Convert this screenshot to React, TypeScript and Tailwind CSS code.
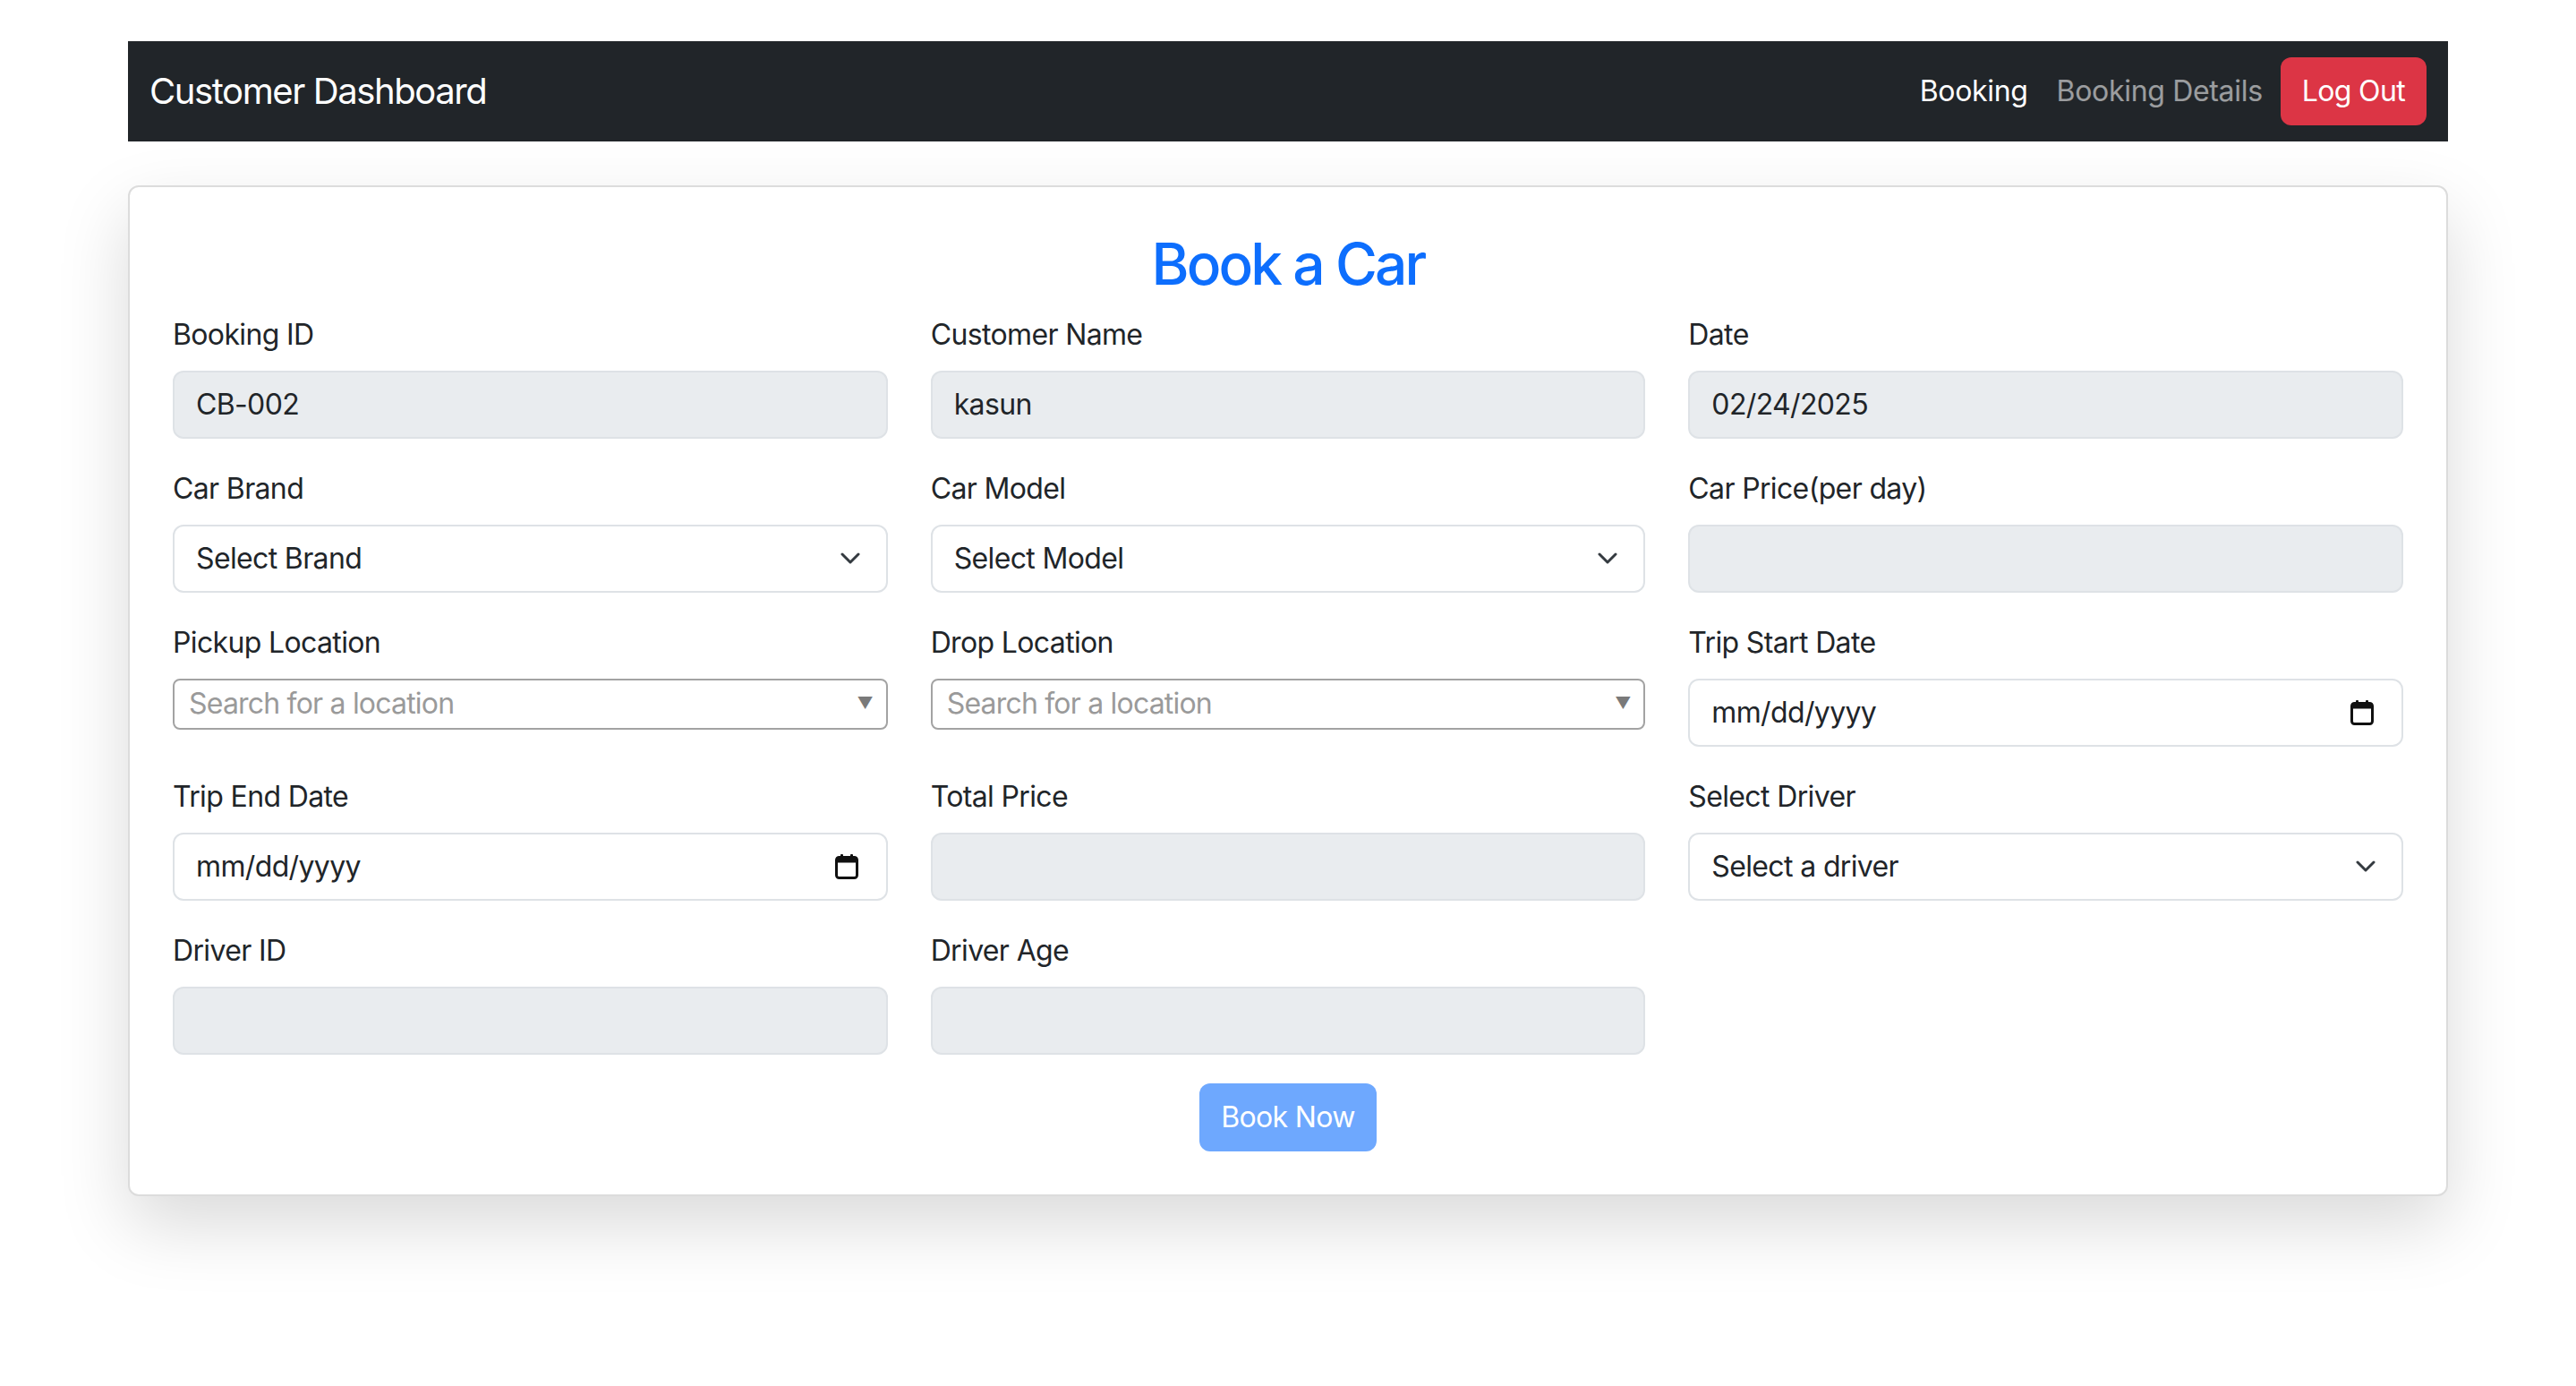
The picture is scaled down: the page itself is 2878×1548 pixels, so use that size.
import React from 'react';

const font = { fontFamily: 'Inter, "Noto Sans", sans-serif' };

const Chevron = () => (
  <svg width="22" height="13" viewBox="0 0 22 13" className="shrink-0">
    <path d="M2 2l9 9 9-9" fill="none" stroke="#343a40" strokeWidth="3" strokeLinecap="round" strokeLinejoin="round" />
  </svg>
);

const CalendarIcon = () => (
  <svg width="26" height="28" viewBox="0 0 26 28" className="shrink-0">
    <rect x="6" y="0" width="3" height="5" rx="1" fill="#111" />
    <rect x="17" y="0" width="3" height="5" rx="1" fill="#111" />
    <rect x="1.5" y="3.5" width="23" height="23" rx="3" fill="none" stroke="#111" strokeWidth="3" />
    <rect x="1.5" y="3.5" width="23" height="6" fill="#111" />
  </svg>
);

const Label: React.FC<{ children: React.ReactNode }> = ({ children }) => (
  <label className="block text-[32px] leading-[48px] tracking-[-0.02em] text-[#212529] mb-[16px]">{children}</label>
);

const baseBox = 'h-[76px] w-full rounded-[12px] border-2 border-[#dee2e6] pl-[24px] text-[32px] tracking-[-0.02em] text-[#212529] flex items-center';

const Field: React.FC<{ label: string; children: React.ReactNode }> = ({ label, children }) => (
  <div className="mb-[32px]">
    <Label>{label}</Label>
    {children}
  </div>
);

const Disabled = ({ value = '' }: { value?: string }) => (
  <div className={`${baseBox} bg-[#e9ecef] pr-[24px]`}>{value}</div>
);

const Select = ({ value }: { value: string }) => (
  <div className={`${baseBox} bg-white justify-between pr-[29px]`}>
    <span>{value}</span>
    <Chevron />
  </div>
);

const DateBox = () => (
  <div className={`${baseBox} bg-white justify-between pr-[31px]`}>
    <span>mm/dd/yyyy</span>
    <CalendarIcon />
  </div>
);

const LocationSearch = () => (
  <div className="h-[57px] w-full rounded-[8px] border-2 border-[#a3a3a3] bg-white pl-[16px] pr-[14px] flex items-center justify-between">
    <span className="text-[32px] tracking-[-0.025em] text-[#9a9a9a] leading-none">Search for a location</span>
    <span className="text-[18px] text-[#7a7a7a] leading-none">▼</span>
  </div>
);

export default function App() {
  return (
    <div className="min-h-screen bg-white" style={font}>
      <div className="ml-[143px] w-[2592px] pt-[46px]">
        <nav className="h-[112px] bg-[#212529] flex items-center justify-between px-[24px]">
          <span className="text-[40px] tracking-[-0.035em] text-white">Customer Dashboard</span>
          <div className="flex items-center tracking-[-0.02em]">
            <a className="px-[16px] text-[32px] text-white">Booking</a>
            <a className="px-[16px] text-[32px] text-white/55">Booking Details</a>
            <button className="ml-[4px] h-[76px] px-[24px] rounded-[12px] bg-[#dc3545] text-white text-[32px] tracking-[-0.02em]">Log Out</button>
          </div>
        </nav>

        <div className="mt-[49px] bg-white border-2 border-[#dcdcdc] rounded-[12px] shadow-[0_32px_80px_rgba(0,0,0,0.15)] p-[48px]">
          <h2 className="text-center text-[64px] leading-[1.2] font-medium tracking-[-0.045em] text-[#0d6efd] mb-[16px]">Book a Car</h2>
          <div className="grid grid-cols-3 gap-x-[48px]">
            <Field label="Booking ID"><Disabled value="CB-002" /></Field>
            <Field label="Customer Name"><Disabled value="kasun" /></Field>
            <Field label="Date"><Disabled value="02/24/2025" /></Field>

            <Field label="Car Brand"><Select value="Select Brand" /></Field>
            <Field label="Car Model"><Select value="Select Model" /></Field>
            <Field label="Car Price(per day)"><Disabled /></Field>

            <Field label="Pickup Location"><LocationSearch /></Field>
            <Field label="Drop Location"><LocationSearch /></Field>
            <Field label="Trip Start Date"><DateBox /></Field>

            <Field label="Trip End Date"><DateBox /></Field>
            <Field label="Total Price"><Disabled /></Field>
            <Field label="Select Driver"><Select value="Select a driver" /></Field>

            <Field label="Driver ID"><Disabled /></Field>
            <Field label="Driver Age"><Disabled /></Field>
          </div>
          <div className="flex justify-center">
            <button className="h-[76px] px-[24px] rounded-[12px] bg-[#6ea8fe] text-white text-[32px] tracking-[-0.02em]">Book Now</button>
          </div>
        </div>
      </div>
    </div>
  );
}
